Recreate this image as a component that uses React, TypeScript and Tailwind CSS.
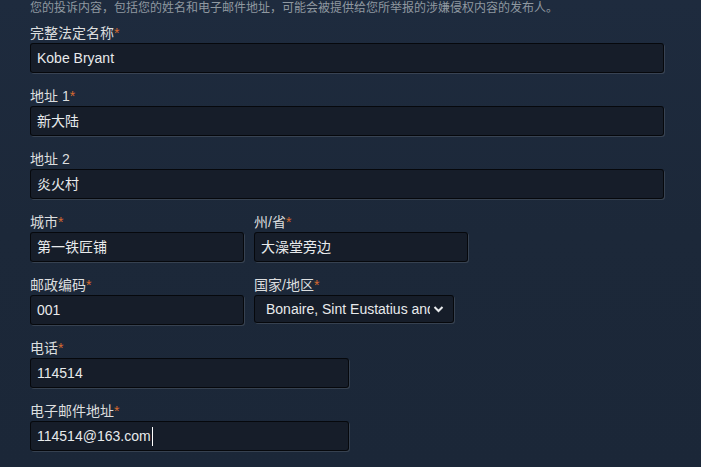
import React from "react";

interface FieldProps {
  label: string;
  required?: boolean;
  value: string;
  width: string;
  caret?: boolean;
}

const Field: React.FC<FieldProps> = ({ label, required, value, width, caret }) => (
  <div className={width}>
    <div className="h-[20px] leading-[20px] text-[14px] text-[#dcdedf]">
      {label}
      {required && <span className="text-[#d8692f]">*</span>}
    </div>
    <div className="h-[30px] rounded-[3px] border border-black/70 bg-[#161d29] shadow-[1px_1px_0px_rgba(255,255,255,0.12)] px-[6px] flex items-center text-[14px] text-[#e8eaec]">
      <span>{value}</span>
      {caret && <span className="w-px h-[19px] bg-white ml-px"></span>}
    </div>
  </div>
);

export default function App() {
  return (
    <div
      className="w-[701px] h-[467px] overflow-hidden bg-gradient-to-b from-[#1e2b3e] via-[#1c2839] to-[#1b2738] pl-[30px]"
      style={{ fontFamily: '"Liberation Sans", Arial, "Noto Sans CJK SC", sans-serif' }}
    >
      <p className="h-[16px] leading-[16px] text-[12px] text-[#8f98a0]">
        您的投诉内容，包括您的姓名和电子邮件地址，可能会被提供给您所举报的涉嫌侵权内容的发布人。
      </p>
      <div className="mt-[7px] flex flex-col gap-[13px]">
        <Field label="完整法定名称" required value="Kobe Bryant" width="w-[634px]" />
        <Field label="地址 1" required value="新大陆" width="w-[634px]" />
        <Field label="地址 2" value="炎火村" width="w-[634px]" />
        <div className="flex gap-[10px]">
          <Field label="城市" required value="第一铁匠铺" width="w-[214px]" />
          <Field label="州/省" required value="大澡堂旁边" width="w-[214px]" />
        </div>
        <div className="flex gap-[10px]">
          <Field label="邮政编码" required value="001" width="w-[214px]" />
          <div className="w-[200px]">
            <div className="h-[20px] leading-[20px] text-[14px] text-[#dcdedf]">
              国家/地区<span className="text-[#d8692f]">*</span>
            </div>
            <div className="h-[28px] rounded-[3px] border border-black/70 bg-[#161d29] shadow-[1px_1px_0px_rgba(255,255,255,0.12)] pl-[11px] pr-[9px] flex items-center text-[14px] text-[#e8eaec]">
              <span className="w-[164px] overflow-hidden whitespace-nowrap">Bonaire, Sint Eustatius and Saba</span>
              <svg className="ml-auto" width="11" height="8" viewBox="0 0 11 8">
                <path d="M1.5 2 L5.5 6 L9.5 2" fill="none" stroke="#e8eaec" strokeWidth="2" />
              </svg>
            </div>
          </div>
        </div>
        <Field label="电话" required value="114514" width="w-[319px]" />
        <Field label="电子邮件地址" required value="114514@163.com" width="w-[319px]" caret />
      </div>
    </div>
  );
}
